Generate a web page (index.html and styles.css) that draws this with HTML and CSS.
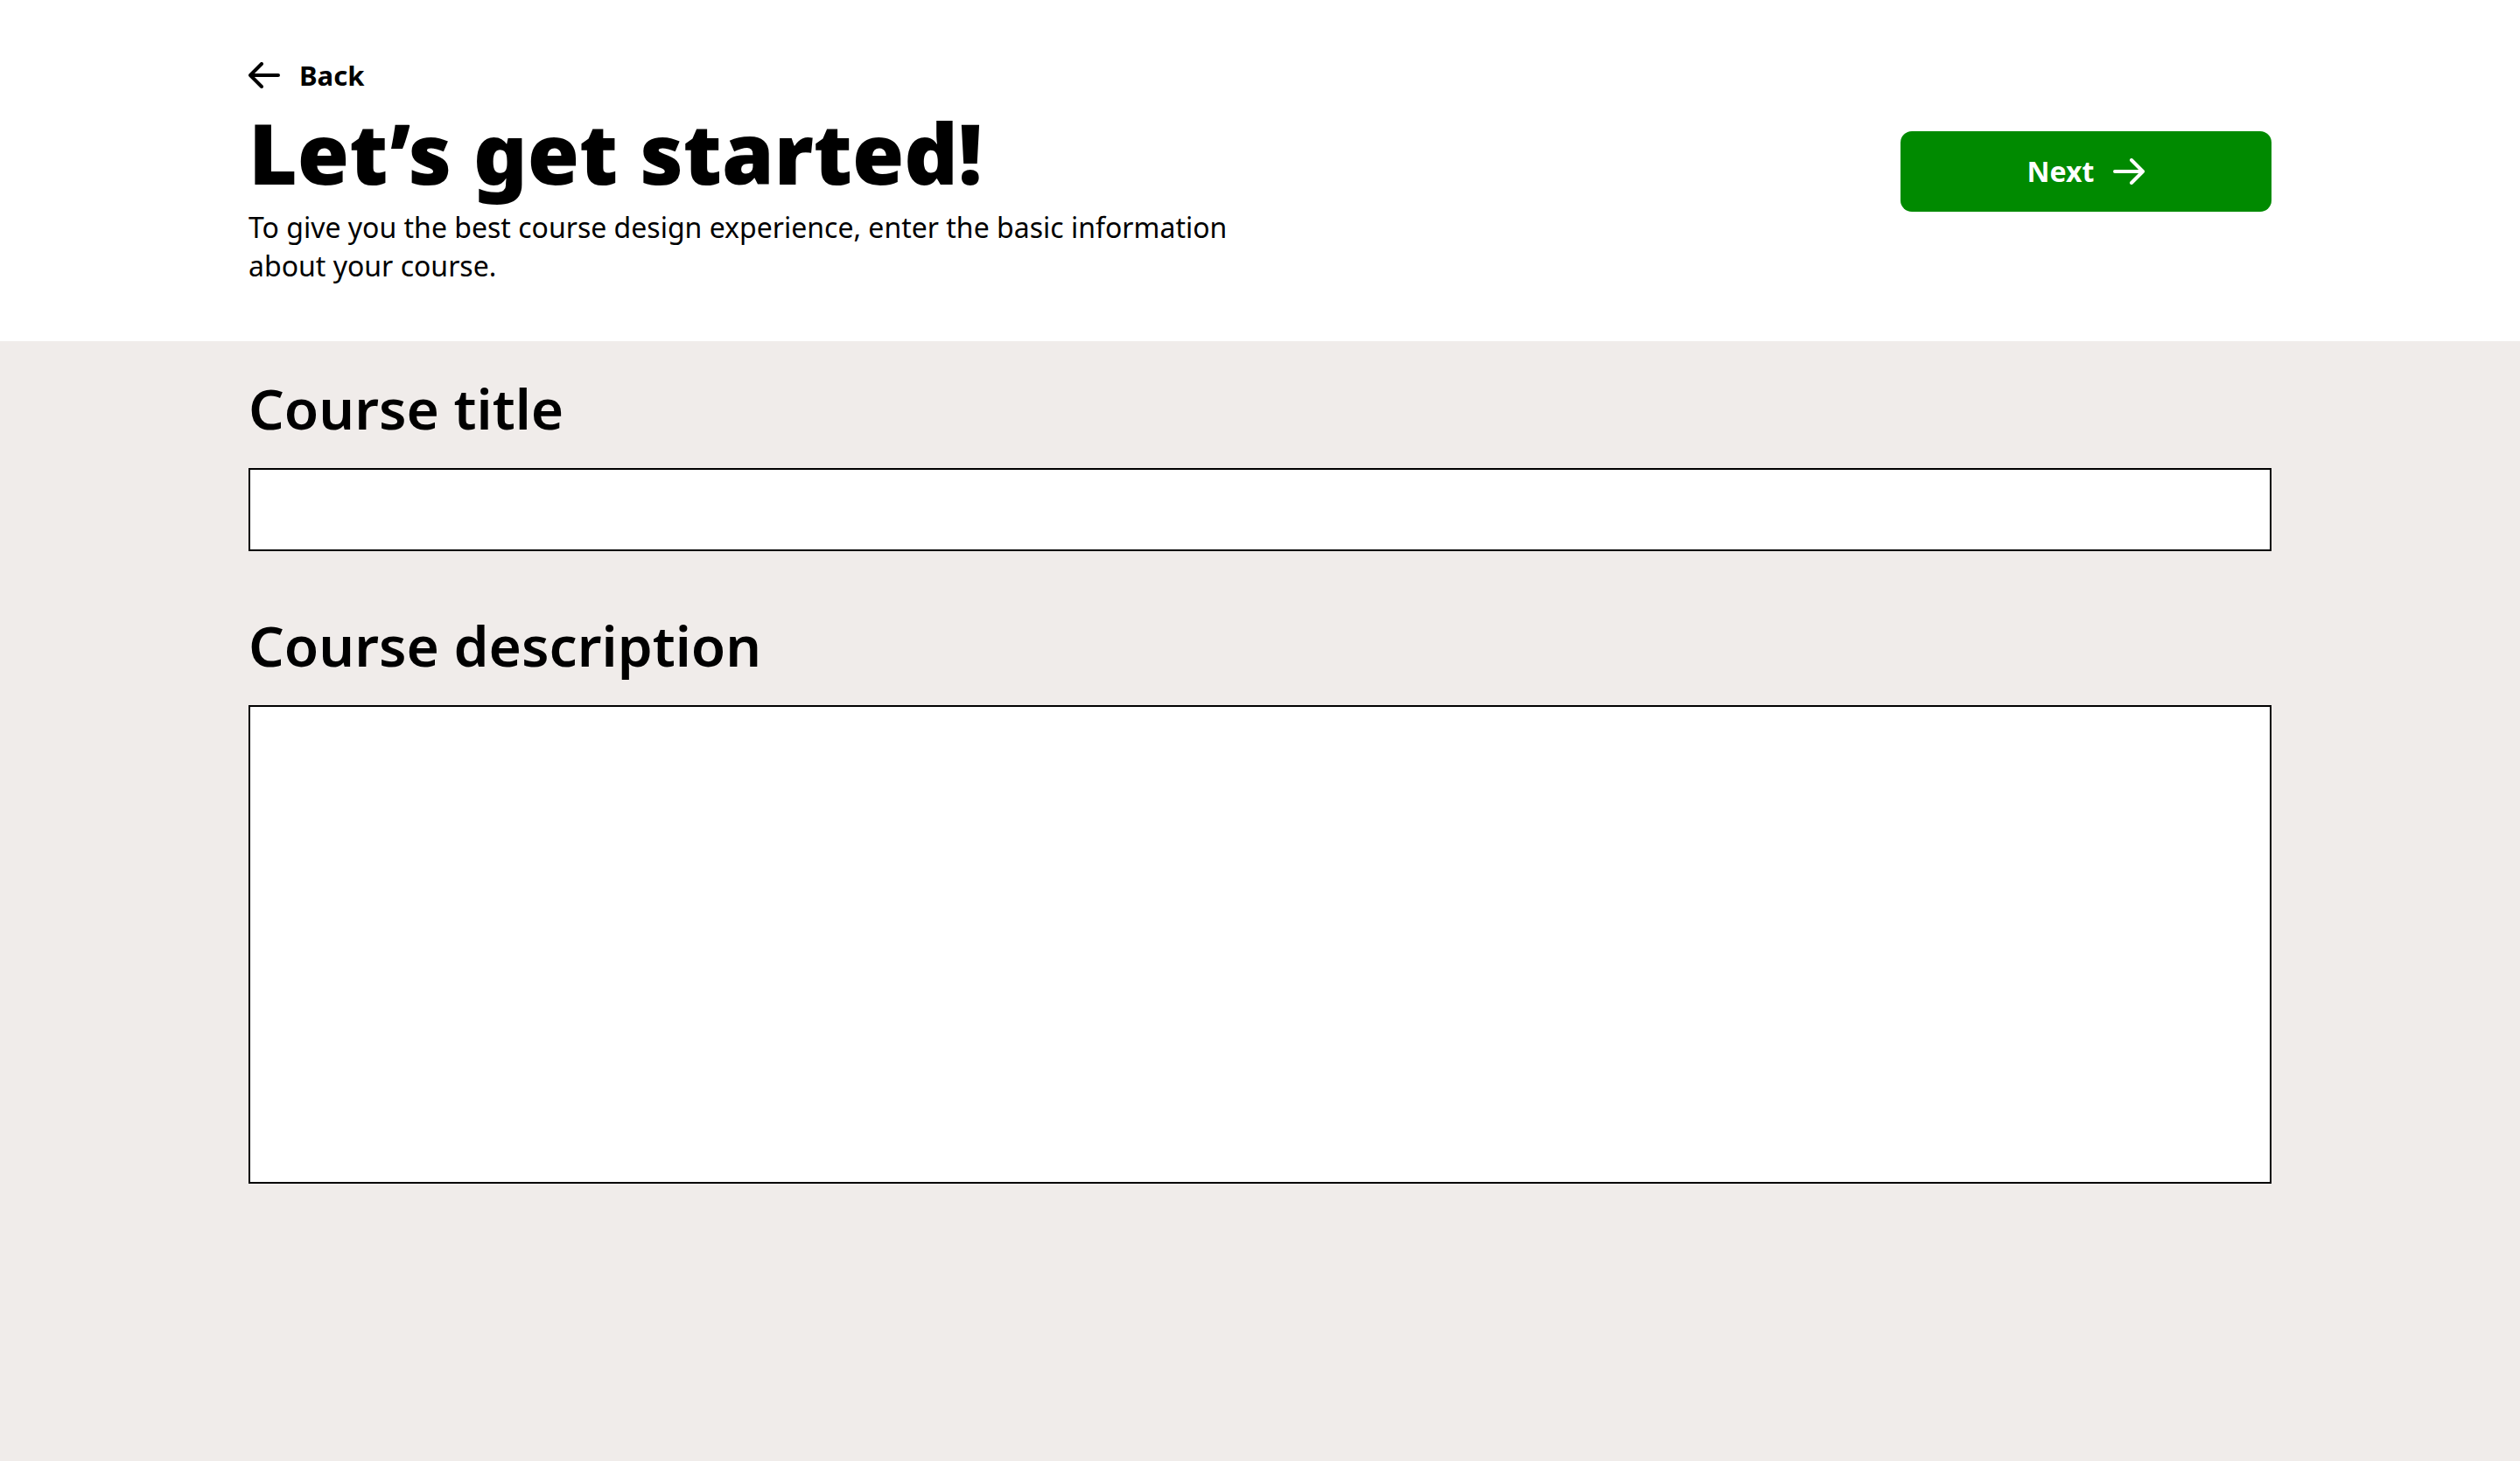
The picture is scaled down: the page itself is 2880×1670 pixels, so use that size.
FILE: index.html
```html
<!DOCTYPE html>
<html lang="en">
<head>
<meta charset="utf-8">
<title>Let’s get started!</title>
<link rel="stylesheet" href="styles.css">
</head>
<body>
<div class="page">
  <header class="intro">
    <div class="intro-inner">
      <div class="intro-text">
        <a class="back-link" href="#">
          <svg class="back-icon" width="36" height="30" viewBox="0 0 36 30" aria-hidden="true">
            <path d="M34 15H2M15 2L2 15L15 28" fill="none" stroke="currentColor" stroke-width="4" stroke-linecap="round" stroke-linejoin="round"/>
          </svg>
          <span>Back</span>
        </a>
        <h1 class="title">Let’s get started!</h1>
        <p class="lead">To give you the best course design experience, enter the basic information about your course.</p>
      </div>
      <button class="next-btn" type="button">
        <span>Next</span>
        <svg class="next-icon" width="36" height="30" viewBox="0 0 36 30" aria-hidden="true">
          <path d="M2 15H34M21 2L34 15L21 28" fill="none" stroke="currentColor" stroke-width="4" stroke-linecap="round" stroke-linejoin="round"/>
        </svg>
      </button>
    </div>
  </header>
  <main class="form-area">
    <div class="form-inner">
      <label class="field-label" for="course-title">Course title</label>
      <input class="text-input" id="course-title" type="text">
      <label class="field-label field-label-spaced" for="course-desc">Course description</label>
      <textarea class="text-area" id="course-desc"></textarea>
    </div>
  </main>
</div>
</body>
</html>
```

FILE: styles.css
```css
* {
  box-sizing: border-box;
}

html, body {
  margin: 0;
  padding: 0;
}

body {
  font-family: "Noto Sans", "Open Sans", sans-serif;
  color: #000;
  background: #f0ecea;
}

.page {
  min-height: 100vh;
  display: flex;
  flex-direction: column;
}

.intro {
  background: #ffffff;
  padding: 66px 0 64px;
}

.intro-inner {
  width: 2312px;
  margin: 0 auto;
  display: flex;
  align-items: center;
  justify-content: space-between;
}

.intro-text {
  display: flex;
  flex-direction: column;
  align-items: flex-start;
}

.back-link {
  display: flex;
  align-items: center;
  gap: 22px;
  color: #000;
  text-decoration: none;
  font-size: 31px;
  font-weight: 700;
  line-height: 40px;
}

.back-icon {
  display: block;
  flex: none;
}

.title {
  margin: 3px 0 -2px;
  font-size: 96px;
  font-weight: 900;
  line-height: 1.362;
  letter-spacing: 0;
}

.lead {
  margin: 0;
  max-width: 1150px;
  font-size: 32px;
  font-weight: 400;
  line-height: 44px;
}

.next-btn {
  width: 424px;
  height: 92px;
  border: none;
  border-radius: 13px;
  background: #008a00;
  color: #ffffff;
  font-family: inherit;
  font-size: 32px;
  font-weight: 700;
  display: flex;
  align-items: center;
  justify-content: center;
  gap: 22px;
  padding: 0;
  cursor: pointer;
}

.next-icon {
  display: block;
  flex: none;
}

.form-area {
  flex: 1;
  background: #f0ecea;
  padding: 33px 0 40px;
}

.form-inner {
  width: 2312px;
  margin: 0 auto;
  display: flex;
  flex-direction: column;
}

.field-label {
  font-size: 64px;
  font-weight: 600;
  line-height: 1.362;
  margin-bottom: 25px;
}

.field-label-spaced {
  margin-top: 64px;
}

.text-input {
  display: block;
  width: 100%;
  height: 95px;
  border: 2px solid #000;
  border-radius: 0;
  background: #fff;
  font-family: inherit;
  font-size: 32px;
  padding: 0 20px;
  outline: none;
}

.text-area {
  display: block;
  width: 100%;
  height: 547px;
  border: 2px solid #000;
  border-radius: 0;
  background: #fff;
  font-family: inherit;
  font-size: 32px;
  padding: 20px;
  resize: none;
  outline: none;
}
```
